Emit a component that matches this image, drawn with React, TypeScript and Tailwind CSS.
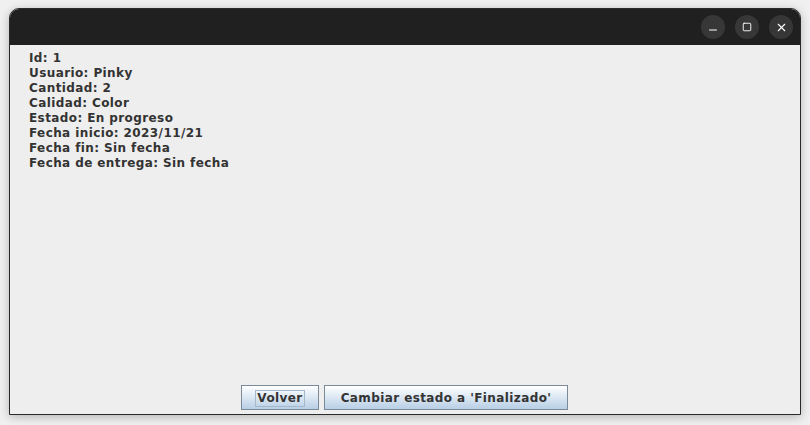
import { Minus, Square, X } from "lucide-react";

const lines = [
  "Id: 1",
  "Usuario: Pinky",
  "Cantidad: 2",
  "Calidad: Color",
  "Estado: En progreso",
  "Fecha inicio: 2023/11/21",
  "Fecha fin: Sin fecha",
  "Fecha de entrega: Sin fecha",
];

function TitleButton({ children }: { children: React.ReactNode }) {
  return (
    <div className="flex h-[24px] w-[24px] items-center justify-center rounded-full bg-[#373737] text-white">
      {children}
    </div>
  );
}

export default function App() {
  return (
    <div className="h-[425px] w-[810px] bg-[#f0f0f0] pl-[9px] pt-[8px] font-['DejaVu_Sans',sans-serif]">
      <div className="flex h-[407px] w-[792px] flex-col overflow-hidden rounded-t-[10px] border border-[#2a2a2a] bg-[#eeeeee] shadow-[0_2px_10px_rgba(0,0,0,0.25)]">
        <div className="flex h-[36px] shrink-0 items-center justify-end gap-[10px] bg-[#202020] pr-[7px]">
          <TitleButton>
            <Minus size={12} strokeWidth={2} className="mt-[6px]" />
          </TitleButton>
          <TitleButton>
            <Square size={10} strokeWidth={2.2} />
          </TitleButton>
          <TitleButton>
            <X size={13} strokeWidth={2} />
          </TitleButton>
        </div>
        <div className="flex flex-1 flex-col">
          <div className="flex-1 pl-[19px] pt-[6px] text-[12px] font-bold leading-[15px] tracking-[0.4px] text-[#333333]">
            {lines.map((l) => (
              <div key={l}>{l}</div>
            ))}
          </div>
          <div className="flex justify-center gap-[5px] pb-[4px] pr-[1px]">
            <button className="flex h-[25px] w-[78px] items-center justify-center border border-[#7a8a99] bg-gradient-to-b from-[#ffffff] to-[#b8cfe5] pt-[1px] text-[12px] font-bold tracking-[0.4px] text-[#333333]">
              <span className="border border-[#a3b8cc] px-[1px] leading-[15px]">Volver</span>
            </button>
            <button className="flex h-[25px] w-[244px] items-center justify-center border border-[#7a8a99] bg-gradient-to-b from-[#ffffff] to-[#b8cfe5] pt-[1px] text-[12px] font-bold tracking-[0.4px] text-[#333333]">
              Cambiar estado a 'Finalizado'
            </button>
          </div>
        </div>
      </div>
    </div>
  );
}
